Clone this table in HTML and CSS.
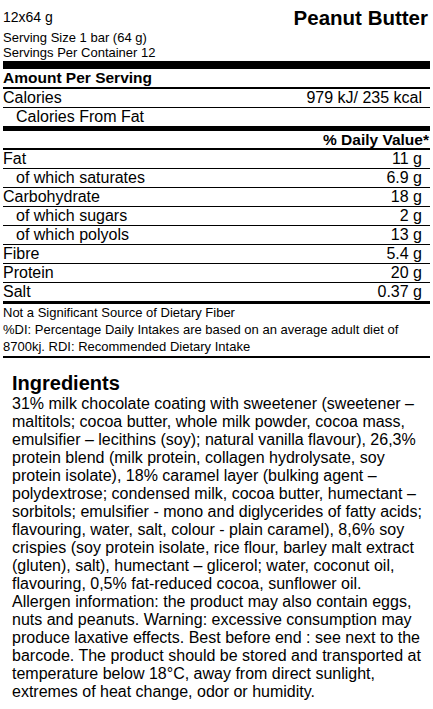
FILE: index.html
```html
<!DOCTYPE html>
<html lang="en">
<head>
  <meta charset="UTF-8" />
  <meta name="viewport" content="width=device-width, initial-scale=1.0"/>
  <title>Peanut Butter - Nutrition Facts</title>
  <link rel="stylesheet" href="styles.css">
</head>
<body>

  <div class="label">
    <div class="top">
      <span class="pack">12x64 g</span>
      <h1 class="title">Peanut Butter</h1>
    </div>
    <div class="serving">
      Serving Size 1 bar (64 g)<br>
      Servings Per Container 12
    </div>

    <div class="bar-thick"></div>
    <div class="row head">Amount Per Serving</div>
    <div class="row"><span>Calories</span><span class="val">979 kJ/ 235 kcal</span></div>
    <div class="row sub last-before-bar">Calories From Fat</div>
    <div class="bar-mid"></div>

    <div class="row dv">% Daily Value*</div>
    <div class="row"><span>Fat</span><span class="val">11 g</span></div>
    <div class="row sub"><span>of which saturates</span><span class="val">6.9 g</span></div>
    <div class="row"><span>Carbohydrate</span><span class="val">18 g</span></div>
    <div class="row sub"><span>of which sugars</span><span class="val">2 g</span></div>
    <div class="row sub"><span>of which polyols</span><span class="val">13 g</span></div>
    <div class="row"><span>Fibre</span><span class="val">5.4 g</span></div>
    <div class="row"><span>Protein</span><span class="val">20 g</span></div>
    <div class="row last"><span>Salt</span><span class="val">0.37 g</span></div>

    <div class="notes">
      Not a Significant Source of Dietary Fiber<br>
      %DI: Percentage Daily Intakes are based on an average adult diet of 8700kj. RDI: Recommended Dietary Intake
    </div>
  </div>

  <div class="ingredients">
    <h2>Ingredients</h2>
    <p>
      31% milk chocolate coating with sweetener (sweetener – maltitols; cocoa butter, whole milk powder, cocoa mass, emulsifier – lecithins (soy); natural vanilla flavour), 26,3% protein blend (milk protein, collagen hydrolysate, soy protein isolate), 18% caramel layer (bulking agent – polydextrose; condensed milk, cocoa butter, humectant – sorbitols; emulsifier - mono and diglycerides of fatty acids; flavouring, water, salt, colour - plain caramel), 8,6% soy crispies (soy protein isolate, rice flour, barley malt extract (gluten), salt), humectant – glicerol; water, coconut oil, flavouring, 0,5% fat-reduced cocoa, sunflower oil.<br>
      Allergen information: the product may also contain eggs, nuts and peanuts. Warning: excessive consumption may produce laxative effects. Best before end : see next to the barcode. The product should be stored and transported at temperature below 18°C, away from direct sunlight, extremes of heat change, odor or humidity.
    </p>
  </div>

</body>
</html>
```

FILE: styles.css
```css
body {
  font-family: "Liberation Sans", Arial, sans-serif;
  background: #fff;
  color: #000;
  margin: 0;
}

.label {
  padding: 0 3px;
}

.top {
  display: flex;
  justify-content: space-between;
  align-items: flex-start;
  padding-top: 6px;
}

.pack {
  font-size: 14px;
  margin-top: 3px;
}

.title {
  margin: 0 2px 0 0;
  font-size: 20.5px;
  line-height: 23px;
  font-weight: bold;
}

.serving {
  margin-top: 1px;
  font-size: 13px;
  line-height: 15px;
}

.bar-thick {
  margin-top: 1px;
  height: 8px;
  background: #000;
}

.bar-mid {
  height: 5px;
  background: #000;
}

.row {
  display: flex;
  justify-content: space-between;
  height: 18px;
  font-size: 16px;
  line-height: 18px;
  border-bottom: 1px solid #000;
}

.row .val {
  padding-right: 8px;
}

.row.sub {
  padding-left: 13px;
}

.row.head {
  font-size: 15.5px;
  font-weight: bold;
  border-bottom-width: 2px;
}

.row.last-before-bar {
  border-bottom: none;
}

.row.dv {
  justify-content: flex-end;
  height: 17px;
  line-height: 17px;
  padding-right: 1px;
  font-size: 15.5px;
  font-weight: bold;
  border-bottom-width: 2px;
}

.row.last {
  border-bottom-width: 3px;
}

.notes {
  font-size: 13px;
  line-height: 17px;
  padding-bottom: 1px;
  border-bottom: 2px solid #000;
}

.ingredients {
  margin-top: 14px;
  padding: 0 11px 0 12px;
}

.ingredients h2 {
  margin: 0;
  font-size: 20px;
  line-height: 23px;
  font-weight: bold;
}

.ingredients p {
  margin: 0;
  font-size: 16px;
  line-height: 18px;
}
```
